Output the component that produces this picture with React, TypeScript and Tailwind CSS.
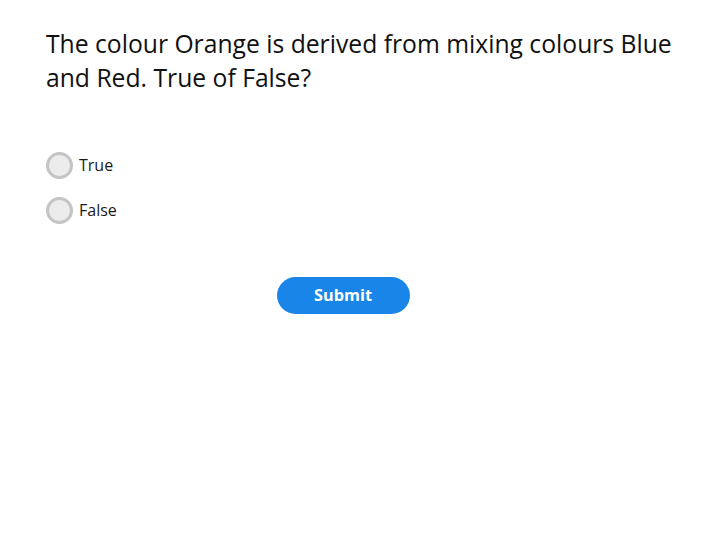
import { useState } from 'react';

const options = ['True', 'False'];

export default function App() {
    const [choice, setChoice] = useState('');

    return (
        <div className="min-h-[540px] w-[720px] bg-white text-[#111]" style={{ fontFamily: '"Open Sans", sans-serif' }}>
            <div className="px-[46px] pt-[27px]">
                {/* Pergunta */}
                <h1 className="text-[24.7px] leading-[34px] font-normal">
                    The colour Orange is derived from mixing colours Blue and Red. True of False?
                </h1>

                {/* Opções */}
                <div className="mt-[57px] flex flex-col gap-[18px]">
                    {options.map((opt) => (
                        <label key={opt} className="flex items-center gap-[6px] cursor-pointer">
                            <span
                                onClick={() => setChoice(opt)}
                                className={`w-[27px] h-[27px] rounded-full border-[3px] border-[#c4c4c4] ${choice === opt ? 'bg-[#1a85e8]' : 'bg-[#ececec]'}`}
                            />
                            <span className="text-[16px] leading-[27px] text-[#1a1a1a]">{opt}</span>
                        </label>
                    ))}
                </div>

                {/* Botão */}
                <div className="mt-[53px] flex justify-center">
                    <button className="ml-[-34px] w-[133px] h-[37px] rounded-full bg-[#1a85e8] text-white font-bold text-[16.3px]">
                        Submit
                    </button>
                </div>
            </div>
        </div>
    );
}
